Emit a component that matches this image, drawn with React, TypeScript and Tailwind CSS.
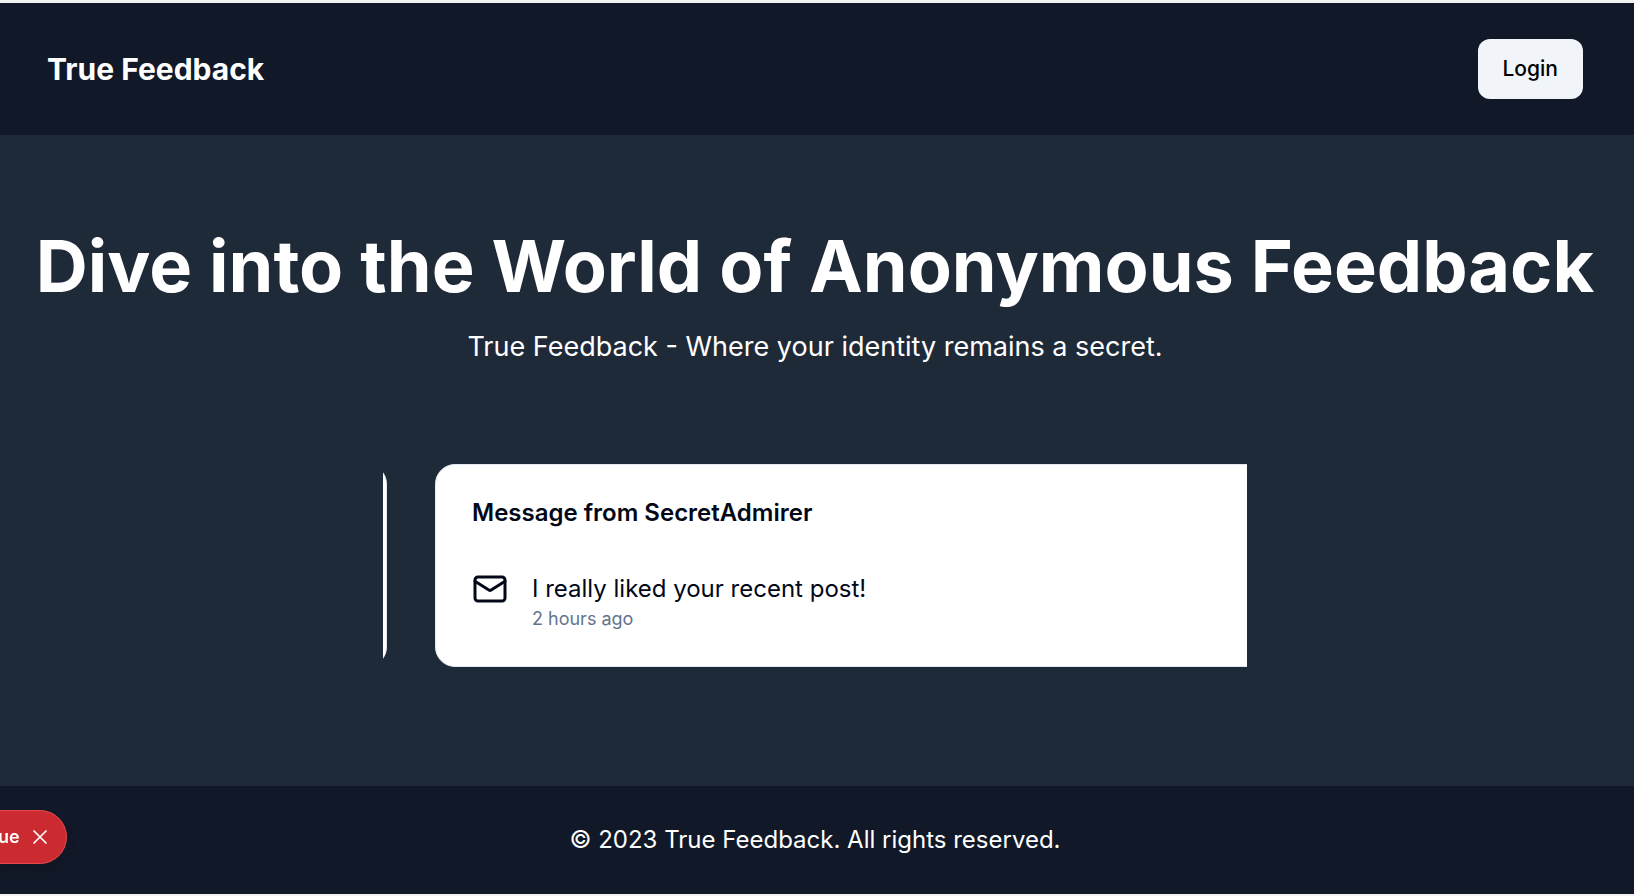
import { X } from "lucide-react";

const messages = [
  { title: "Message from SecretAdmirer", content: "I really liked your recent post!", received: "2 hours ago" },
];

function MailIcon() {
  return (
    <svg viewBox="0 0 24 24" className="size-9 shrink-0" fill="none" stroke="currentColor" strokeWidth="2" strokeLinecap="round" strokeLinejoin="round" aria-hidden="true">
      <rect width="20" height="16" x="2" y="4" rx="2" />
      <path d="m22 6.9-9.5 5.9a.95.95 0 0 1-1 0L2 6.9" />
    </svg>
  );
}

function Header() {
  return (
    <nav className="bg-[#111827] px-[47px] py-9">
      <div className="flex items-center justify-between">
        <a href="#" className="text-3xl font-bold">True Feedback</a>
        <button type="button" className="h-[60px] rounded-xl bg-slate-100 px-[25px] text-[21px] font-medium text-black">Login</button>
      </div>
    </nav>
  );
}

function MessageCard({ title, content, received }: (typeof messages)[number]) {
  return (
    <article className="w-full shrink-0 rounded-[20px] border border-slate-200 bg-white px-9 pt-[30px] pb-[35px] text-[#020817]">
      <h2 className="text-2xl leading-9 font-semibold">{title}</h2>
      <div className="mt-10 flex items-start gap-6">
        <MailIcon />
        <div>
          <p className="text-2xl leading-9">{content}</p>
          <p className="text-lg leading-6 text-slate-500">{received}</p>
        </div>
      </div>
    </article>
  );
}

export default function App() {
  return (
    <div className="min-h-screen overflow-hidden border-t-3 border-b-2 border-[#f1f1f1] bg-[#1f2a39] font-[Inter,sans-serif] text-white">
      <div className="flex min-h-[calc(100vh-5px)] flex-col bg-[#111827] pr-1">
        <Header />
        <main className="-mr-1 flex grow flex-col items-center bg-[#1f2a39] pt-[95px] pr-8 pb-24 pl-7">
          <section className="text-center">
            <h1 className="text-[72px] leading-[72px] font-bold">Dive into the World of Anonymous Feedback</h1>
            <p className="mt-6 text-[27px] leading-[42px]">True Feedback - Where your identity remains a secret.</p>
          </section>
          <section className="mt-24 w-full max-w-[864px] overflow-hidden" aria-roledescription="carousel">
            <div className="flex translate-x-[52px] gap-12">
              <div className="-ml-[912px] w-full shrink-0 rounded-[20px] border border-slate-200 bg-white" aria-hidden="true" />
              {messages.map((m) => <MessageCard key={m.title} {...m} />)}
            </div>
          </section>
        </main>
        <footer className="px-9 py-9 text-center text-2xl leading-9">© 2023 True Feedback. All rights reserved.</footer>
      </div>
      <div className="fixed bottom-8 left-0 flex h-[54px] items-center gap-2 rounded-r-full border border-l-0 border-[#e5484d] bg-[#ca2a30] pr-3.5 shadow-lg">
        <span className="-ml-0.5 text-lg font-semibold">ue</span>
        <button type="button" aria-label="Dismiss"><X className="size-6" strokeWidth={1.75} /></button>
      </div>
    </div>
  );
}
